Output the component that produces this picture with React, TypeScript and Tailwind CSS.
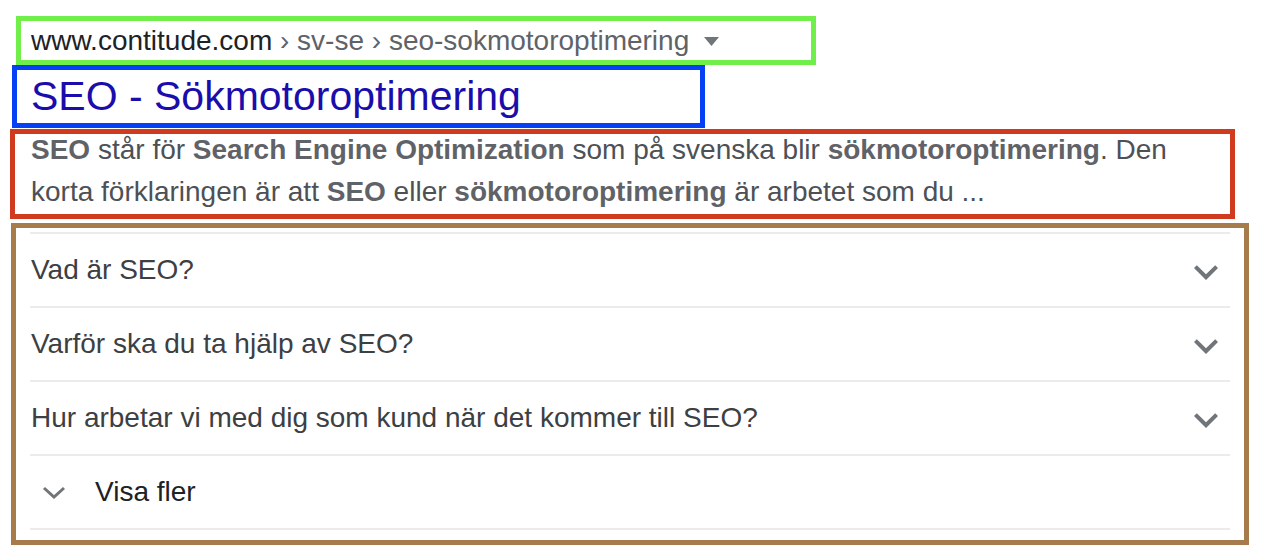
import React from "react";

const font = { fontFamily: '"Liberation Sans", Arial, sans-serif' };

function ExpandMore() {
  return (
    <svg width="48" height="48" viewBox="0 0 24 24" className="shrink-0 mt-[3px]">
      <path d="M16.59 8.59L12 13.17 7.41 8.59 6 10l6 6 6-6z" fill="#70757a" />
    </svg>
  );
}

function Question({ text }: { text: string }) {
  return (
    <>
      <div className="h-[72px] flex items-center justify-between">
        <span className="text-[28px] text-[#3c4043] pl-[1px]">{text}</span>
        <ExpandMore />
      </div>
      <div className="h-[2px] bg-[#ebebeb]" />
    </>
  );
}

export default function App() {
  return (
    <div className="w-[1280px] h-[556px] bg-white flex flex-col items-start pt-[16px]" style={font}>
      {/* breadcrumb */}
      <div className="ml-[16px] w-[800px] h-[49px] border-[5px] border-[#70ef4a] flex items-center pl-[10px]">
        <span className="text-[28px] leading-[39px] whitespace-nowrap">
          <span className="text-[#202124]">www.contitude.com</span>
          <span className="text-[#5f6368]"> › sv-se › seo-sokmotoroptimering</span>
        </span>
        <svg width="15" height="9" viewBox="0 0 15 9" className="ml-[15px] mt-[1px]">
          <polygon points="0,0 15,0 7.5,9" fill="#70757a" />
        </svg>
      </div>
      {/* title */}
      <div className="ml-[12px] w-[693px] h-[63px] border-[5px] border-[#0540f5] flex items-center pl-[14px]">
        <span className="text-[41px] leading-[53px] text-[#1a0dab] whitespace-nowrap">SEO - Sökmotoroptimering</span>
      </div>
      {/* snippet */}
      <div className="ml-[10px] mt-[1px] w-[1225px] h-[90px] border-[5px] border-[#d03a1f] pl-[16px]">
        <p className="text-[28px] leading-[42px] text-[#4d5156] -mt-[5px] whitespace-nowrap">
          <b className="text-[#5f6368]">SEO</b> står för <b className="text-[#5f6368]">Search Engine Optimization</b> som på svenska blir <b className="text-[#5f6368]">sökmotoroptimering</b>. Den
          <br />
          korta förklaringen är att <b className="text-[#5f6368]">SEO</b> eller <b className="text-[#5f6368]">sökmotoroptimering</b> är arbetet som du ...
        </p>
      </div>
      {/* FAQ */}
      <div className="ml-[11px] mt-[4px] w-[1238px] h-[322px] border-[5px] border-[#a67c4c] pt-[4px] pl-[14px] pr-[14px]">
        <div className="h-[2px] bg-[#ebebeb]" />
        <Question text="Vad är SEO?" />
        <Question text="Varför ska du ta hjälp av SEO?" />
        <Question text="Hur arbetar vi med dig som kund när det kommer till SEO?" />
        <div className="h-[72px] flex items-center">
          <svg width="24" height="13" viewBox="0 0 24 13" className="ml-[12px]">
            <polyline points="2,2 12,11 22,2" fill="none" stroke="#70757a" strokeWidth="3" />
          </svg>
          <span className="ml-[29px] text-[28px] text-[#202124]">Visa fler</span>
        </div>
        <div className="h-[2px] bg-[#ebebeb]" />
      </div>
    </div>
  );
}
